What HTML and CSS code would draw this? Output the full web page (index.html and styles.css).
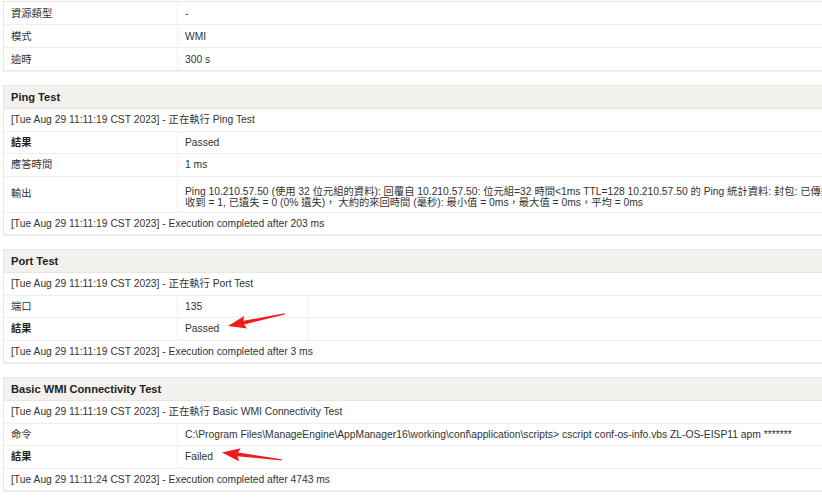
FILE: index.html
```html
<!DOCTYPE html>
<html lang="zh-Hant">
<head>
<meta charset="utf-8">
<title>Test</title>
<link rel="stylesheet" href="styles.css">
</head>
<body>
<div class="page">
  <section class="card first">
    <div class="row"><div class="k">資源類型</div><div class="v">-</div></div>
    <div class="row"><div class="k">模式</div><div class="v">WMI</div></div>
    <div class="row"><div class="k">逾時</div><div class="v">300 s</div></div>
  </section>

  <section class="card">
    <div class="head">Ping Test</div>
    <div class="row full">[Tue Aug 29 11:11:19 CST 2023] - 正在執行 Ping Test</div>
    <div class="row"><div class="k b">結果</div><div class="v">Passed</div></div>
    <div class="row"><div class="k">應答時間</div><div class="v">1 ms</div></div>
    <div class="row tall"><div class="k">輸出</div><div class="v lines"><span>Ping 10.210.57.50 (使用 32 位元組的資料): 回覆自 10.210.57.50: 位元組=32 時間&lt;1ms TTL=128 10.210.57.50 的 Ping 統計資料: 封包: 已傳送 = 1, 已</span><span>收到 = 1, 已遺失 = 0 (0% 遺失)， 大約的來回時間 (毫秒): 最小值 = 0ms，最大值 = 0ms，平均 = 0ms</span></div></div>
    <div class="row full">[Tue Aug 29 11:11:19 CST 2023] - Execution completed after 203 ms</div>
  </section>

  <section class="card">
    <div class="head">Port Test</div>
    <div class="row full">[Tue Aug 29 11:11:19 CST 2023] - 正在執行 Port Test</div>
    <div class="row three"><div class="k">端口</div><div class="v">135</div><div class="e"></div></div>
    <div class="row three"><div class="k b">結果</div><div class="v">Passed</div><div class="e"></div></div>
    <div class="row full">[Tue Aug 29 11:11:19 CST 2023] - Execution completed after 3 ms</div>
  </section>

  <section class="card">
    <div class="head">Basic WMI Connectivity Test</div>
    <div class="row full">[Tue Aug 29 11:11:19 CST 2023] - 正在執行 Basic WMI Connectivity Test</div>
    <div class="row"><div class="k">命令</div><div class="v">C:\Program Files\ManageEngine\AppManager16\working\conf\application\scripts&gt; cscript conf-os-info.vbs ZL-OS-EISP11 apm *******</div></div>
    <div class="row"><div class="k b">結果</div><div class="v">Failed</div></div>
    <div class="row full">[Tue Aug 29 11:11:24 CST 2023] - Execution completed after 4743 ms</div>
  </section>
</div>

<svg class="marks" width="822" height="498" viewBox="0 0 822 498" xmlns="http://www.w3.org/2000/svg">
  <g fill="#ee1c1c">
    <polygon transform="translate(228 326) rotate(-12)" points="0,0 18,-6.5 16,-1.9 58,-0.6 58,0.6 16,1.9 18,6.5"/>
    <polygon transform="translate(222 452.5) rotate(7)" points="0,0 18,-6.5 16,-1.9 60,-0.6 60,0.6 16,1.9 18,6.5"/>
  </g>
</svg>
</body>
</html>
```
FILE: styles.css
```css
html, body {
  margin: 0;
  padding: 0;
  background: #ffffff;
  overflow: hidden;
}

body {
  font-family: "Liberation Sans", Arial, "Noto Sans CJK TC", sans-serif;
  font-size: 10.3px;
  color: #333333;
  position: relative;
  width: 822px;
  height: 498px;
}

.page {
  padding: 1px 0 0 3px;
  display: flex;
  flex-direction: column;
  gap: 14px;
  width: 920px;
}

.card {
  border: 1px solid #e9e7e3;
  box-shadow: 0 1px 1px rgba(0, 0, 0, 0.05);
  background: #ffffff;
  display: flex;
  flex-direction: column;
}

.card.first .row {
  height: 22px;
  line-height: 23px;
}

.head {
  height: 22px;
  line-height: 23px;
  background: #f3f1ed;
  border-bottom: 1px solid #e9e5df;
  padding-left: 7px;
  font-weight: bold;
  font-size: 11.1px;
  color: #222222;
}

.row {
  display: grid;
  grid-template-columns: 174px 1fr;
  height: 21.5px;
  line-height: 22px;
  border-top: 1px solid #f1efec;
}

.head + .row,
.card > .row:first-child {
  border-top: 0;
}

.row.three {
  grid-template-columns: 174px 130px 1fr;
}

.row.full {
  display: block;
  padding-left: 7px;
  white-space: nowrap;
}

.row.tall {
  height: 35px;
}

.k {
  padding-left: 7px;
  border-right: 1px solid #f3f1ee;
  white-space: nowrap;
  display: flex;
  align-items: center;
}

.k.b {
  font-weight: bold;
  color: #222222;
}

.v {
  padding-left: 7px;
  white-space: nowrap;
  overflow: hidden;
}

.e {
  border-left: 1px solid #f3f1ee;
}

.v.lines {
  display: flex;
  flex-direction: column;
  justify-content: center;
  line-height: 11px;
  padding-top: 6px;
}

.marks {
  position: absolute;
  left: 0;
  top: 0;
  pointer-events: none;
}
```
